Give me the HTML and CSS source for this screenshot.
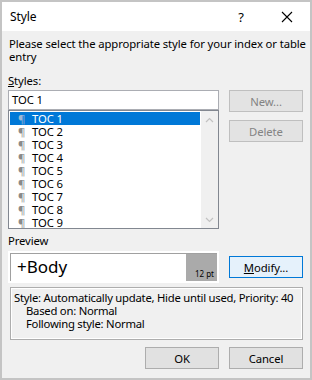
FILE: index.html
```html
<!DOCTYPE html>
<html lang="en">
<head>
    <meta charset="UTF-8">
    <title>Style</title>
    <link rel="stylesheet" href="styles.css">
</head>
<body>
<div class="dialog">
    <div class="titlebar">
        <span class="title">Style</span>
        <span class="title-btn">?</span>
        <span class="title-btn close">
            <svg width="12" height="12" viewBox="0 0 12 12"><path d="M1 1L11 11M11 1L1 11" stroke="#000" stroke-width="1.1" fill="none"/></svg>
        </span>
    </div>
    <div class="content">
        <p class="intro">Please select the appropriate style for your index or table<br>entry</p>
        <div class="main-grid">
            <div class="label"><u>S</u>tyles:</div>
            <div class="styles-col">
                <div class="style-input">TOC 1</div>
                <div class="style-list">
                    <div class="items">
                        <div class="item selected"><span class="pil">¶</span>TOC 1</div>
                        <div class="item"><span class="pil">¶</span>TOC 2</div>
                        <div class="item"><span class="pil">¶</span>TOC 3</div>
                        <div class="item"><span class="pil">¶</span>TOC 4</div>
                        <div class="item"><span class="pil">¶</span>TOC 5</div>
                        <div class="item"><span class="pil">¶</span>TOC 6</div>
                        <div class="item"><span class="pil">¶</span>TOC 7</div>
                        <div class="item"><span class="pil">¶</span>TOC 8</div>
                        <div class="item"><span class="pil">¶</span>TOC 9</div>
                    </div>
                    <div class="scrollbar">
                        <svg width="9" height="6" viewBox="0 0 9 6"><path d="M1 5L4.5 1.5L8 5" stroke="#c2c2c2" stroke-width="1.2" fill="none"/></svg>
                        <svg width="9" height="6" viewBox="0 0 9 6"><path d="M1 1L4.5 4.5L8 1" stroke="#c2c2c2" stroke-width="1.2" fill="none"/></svg>
                    </div>
                </div>
            </div>
            <div class="side-btns">
                <button class="btn disabled">New...</button>
                <button class="btn disabled">Delete</button>
            </div>
            <div class="label preview-label">Preview</div>
            <div class="preview">
                <div class="preview-inner">
                    <span class="preview-text">+Body</span>
                    <span class="preview-size">12 pt</span>
                </div>
            </div>
            <button class="btn default modify"><u>M</u>odify...</button>
        </div>
        <div class="description">
            <div>Style: Automatically update, Hide until used, Priority: 40</div>
            <div class="indent">Based on: Normal</div>
            <div class="indent">Following style: Normal</div>
        </div>
        <div class="footer">
            <button class="btn">OK</button>
            <button class="btn">Cancel</button>
        </div>
    </div>
</div>
</body>
</html>
```

FILE: styles.css
```css
body {
    margin: 0;
    font-family: "Noto Sans", "Open Sans", sans-serif;
    font-size: 11.3px;
    letter-spacing: -0.1px;
    color: #000000;
}

.dialog {
    width: 312px;
    height: 380px;
    box-sizing: border-box;
    border: 2px solid #c4c4c4;
    background-color: #f0f0f0;
    display: flex;
    flex-direction: column;
}

.titlebar {
    height: 29px;
    background-color: #ffffff;
    display: flex;
    align-items: center;
}

.title {
    flex: 1;
    padding-left: 8px;
    font-size: 12px;
}

.title-btn {
    width: 46px;
    height: 29px;
    display: flex;
    align-items: center;
    justify-content: center;
    font-size: 13px;
}

.content {
    padding: 0 7px 0 6px;
    display: flex;
    flex-direction: column;
}

.intro {
    margin: 6px 0 0 1px;
    line-height: 13px;
    white-space: nowrap;
}

.main-grid {
    display: grid;
    grid-template-columns: 211px 74px;
    column-gap: 10px;
    margin-top: 11px;
}

.label {
    grid-column: 1 / 3;
    line-height: 14px;
    margin-bottom: 2px;
}

.styles-col {
    display: flex;
    flex-direction: column;
}

.style-input {
    height: 20px;
    box-sizing: border-box;
    border: 1px solid #abadb3;
    background-color: #ffffff;
    padding-left: 3px;
    line-height: 18px;
}

.style-list {
    height: 119px;
    box-sizing: border-box;
    border: 1px solid #828790;
    background-color: #ffffff;
    display: flex;
}

.items {
    flex: 1;
    padding: 1px 1px 0 1px;
}

.item {
    height: 13px;
    line-height: 13px;
    padding-left: 8px;
}

.item.selected {
    background-color: #0078d7;
    color: #ffffff;
}

.pil {
    display: inline-block;
    width: 14px;
    color: #8a8a8a;
}

.item.selected .pil {
    color: #9db8d6;
}

.scrollbar {
    width: 17px;
    background-color: #f0f0f0;
    display: flex;
    flex-direction: column;
    justify-content: space-between;
    align-items: center;
    padding: 6px 0 5px;
}

.side-btns {
    display: flex;
    flex-direction: column;
    gap: 8px;
}

.btn {
    width: 74px;
    height: 22px;
    box-sizing: border-box;
    border: 1px solid #adadad;
    background-color: #e1e1e1;
    font-family: inherit;
    font-size: 11.3px;
    letter-spacing: -0.1px;
    color: #000000;
    padding: 0;
}

.btn.disabled {
    border-color: #bfbfbf;
    background-color: #e3e3e3;
    color: #838383;
}

.btn.default {
    border-color: #0078d7;
    background-color: #e5f1fb;
}

.preview-label {
    margin-top: 5px;
    margin-bottom: 3px;
}

.preview {
    height: 32px;
    box-sizing: border-box;
    border: 2px solid #ffffff;
}

.preview-inner {
    height: 100%;
    box-sizing: border-box;
    border: 1px solid #a0a0a0;
    border-right: none;
    border-bottom: none;
    background-color: #ffffff;
    display: flex;
}

.preview-text {
    flex: 1;
    font-size: 17px;
    line-height: 26px;
    padding-left: 6px;
    letter-spacing: 0;
}

.preview-size {
    width: 28px;
    background-color: #aaaaaa;
    font-size: 8px;
    letter-spacing: 0;
    display: flex;
    align-items: flex-end;
    justify-content: flex-end;
    padding: 0 3px 2px 0;
}

.modify {
    align-self: center;
}

.description {
    margin-top: 4px;
    height: 53px;
    box-sizing: border-box;
    border: 1px solid #adadad;
    box-shadow: inset 1px 1px 0 #ffffff, inset -1px -1px 0 #ffffff;
    padding: 3px 3px;
    line-height: 13px;
    margin-left: 2px;
    letter-spacing: -0.25px;
    white-space: nowrap;
    overflow: hidden;
}

.indent {
    padding-left: 12px;
}

.footer {
    display: flex;
    justify-content: flex-end;
    gap: 10px;
    margin-top: 7px;
}
```
